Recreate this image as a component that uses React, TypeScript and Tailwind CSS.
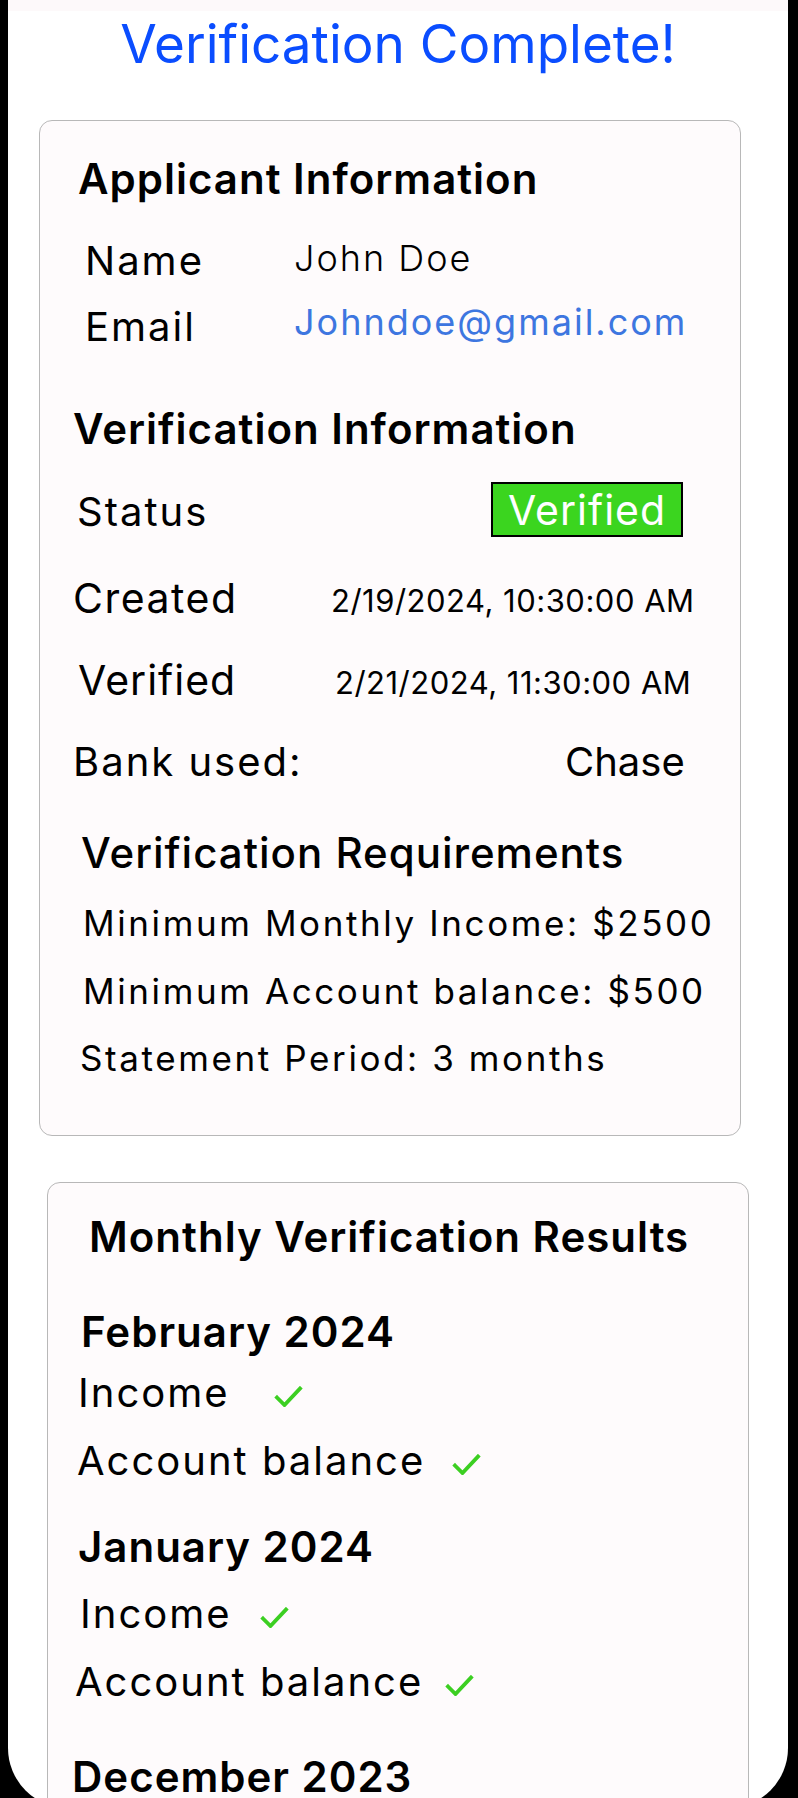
import React from "react";

interface CheckRow {
  label: string;
  ml: string;
  mt: string;
  gap: string;
}

interface MonthProps {
  month: string;
  ml: string;
  mt: string;
  rows: CheckRow[];
}

const Check = ({ gap }: { gap: string }) => {
  return (
    <svg
      className={`${gap} mt-[13px] h-[21px] w-[29px] shrink-0`}
      viewBox="0 0 29 21"
      fill="none"
    >
      <polyline
        points="3,11.5 10.5,19 26,2.5"
        stroke="#3ccf22"
        strokeWidth="3.8"
        strokeLinecap="square"
      />
    </svg>
  );
};

const months: MonthProps[] = [
  {
    month: "February 2024",
    ml: "ml-[33px]",
    mt: "mt-[53px]",
    rows: [
      { label: "Income", ml: "ml-[30px]", mt: "mt-[20px]", gap: "ml-[44px]" },
      { label: "Account balance", ml: "ml-[29px]", mt: "mt-[28px]", gap: "ml-[27px]" },
    ],
  },
  {
    month: "January 2024",
    ml: "ml-[30px]",
    mt: "mt-[45px]",
    rows: [
      { label: "Income", ml: "ml-[32px]", mt: "mt-[26px]", gap: "ml-[28px]" },
      { label: "Account balance", ml: "ml-[27px]", mt: "mt-[28px]", gap: "ml-[22px]" },
    ],
  },
  {
    month: "December 2023",
    ml: "ml-[24px]",
    mt: "mt-[54px]",
    rows: [],
  },
];

const App = () => {
  return (
    <div className="h-[1798px] overflow-hidden bg-black pl-[8px] pr-[10px] [font-family:Inter,'Noto_Sans',sans-serif] text-black">
      <div className="h-[1808px] rounded-b-[60px] bg-white overflow-hidden">
        <div className="h-[11px] bg-[#fdf9fa]" />

        {/* Title */}
        <h1 className="mt-[7px] text-center text-[53px] leading-none font-normal text-[#0a4dff]">
          Verification Complete!
        </h1>

        {/* Applicant + verification card */}
        <div className="ml-[31px] mt-[49px] w-[702px] rounded-[13px] border border-[#b8b8b8] bg-[#fefbfc] pb-[59px]">
          <h2 className="ml-[38px] mt-[37px] text-[42px] leading-none font-semibold tracking-[1px]">
            Applicant Information
          </h2>
          <div className="ml-[45px] mt-[41px] flex items-start">
            <span className="w-[209px] text-[40px] leading-none tracking-[2px]">Name</span>
            <span className="mt-[-1px] text-[36px] leading-none font-light tracking-[2px]">
              John Doe
            </span>
          </div>
          <div className="ml-[45px] mt-[24px] flex items-start">
            <span className="mt-[2px] w-[209px] text-[40px] leading-none tracking-[2px]">
              Email
            </span>
            <span className="mt-[-1px] text-[36px] leading-none tracking-[2px] text-[#3d76e0]">
              Johndoe@gmail.com
            </span>
          </div>

          <h2 className="ml-[33px] mt-[61px] text-[42px] leading-none font-semibold tracking-[1px]">
            Verification Information
          </h2>
          <div className="ml-[37px] mt-[32px] flex items-start">
            <span className="mt-[10px] w-[414px] text-[40px] leading-none tracking-[2px]">
              Status
            </span>
            <span className="flex h-[55px] w-[192px] items-center justify-center border-2 border-black bg-[#3bd51f] pt-[2px] text-[41px] leading-none tracking-[1px] text-white">
              Verified
            </span>
          </div>
          <div className="ml-[33px] mt-[41px] flex items-start">
            <span className="w-[258px] text-[41px] leading-none tracking-[1.5px]">Created</span>
            <span className="mt-[7px] text-[31px] leading-none tracking-[0.5px]">
              2/19/2024, 10:30:00 AM
            </span>
          </div>
          <div className="ml-[38px] mt-[41px] flex items-start">
            <span className="w-[257px] text-[41px] leading-none tracking-[1px]">Verified</span>
            <span className="mt-[7px] text-[31px] leading-none tracking-[0.5px]">
              2/21/2024, 11:30:00 AM
            </span>
          </div>
          <div className="ml-[33px] mt-[41px] flex items-start">
            <span className="w-[492px] text-[40px] leading-none tracking-[2px]">
              Bank used:
            </span>
            <span className="text-[40px] leading-none">Chase</span>
          </div>

          <h3 className="ml-[41px] mt-[50px] text-[42px] leading-none font-medium tracking-[1px]">
            Verification Requirements
          </h3>
          <p className="ml-[43px] mt-[32px] text-[35px] leading-none tracking-[2.6px]">
            Minimum Monthly Income: $2500
          </p>
          <p className="ml-[43px] mt-[33px] text-[35px] leading-none tracking-[2.6px]">
            Minimum Account balance: $500
          </p>
          <p className="ml-[40px] mt-[32px] text-[35px] leading-none tracking-[2.6px]">
            Statement Period: 3 months
          </p>
        </div>

        {/* Monthly results card */}
        <div className="ml-[39px] mt-[46px] w-[702px] rounded-[13px] border border-[#b8b8b8] bg-[#fefbfc] pb-[80px]">
          <h2 className="ml-[41px] mt-[33px] text-[42px] leading-none font-semibold tracking-[1px]">
            Monthly Verification Results
          </h2>
          {months.map((m) => {
            return (
              <div key={m.month}>
                <h3
                  className={`${m.ml} ${m.mt} text-[42px] leading-none font-semibold tracking-[1px]`}
                >
                  {m.month}
                </h3>
                {m.rows.map((row) => {
                  return (
                    <div key={row.label} className={`${row.ml} ${row.mt} flex items-start`}>
                      <span className="text-[40px] leading-none tracking-[2px]">
                        {row.label}
                      </span>
                      <Check gap={row.gap} />
                    </div>
                  );
                })}
              </div>
            );
          })}
        </div>
      </div>
    </div>
  );
};

export default App;
